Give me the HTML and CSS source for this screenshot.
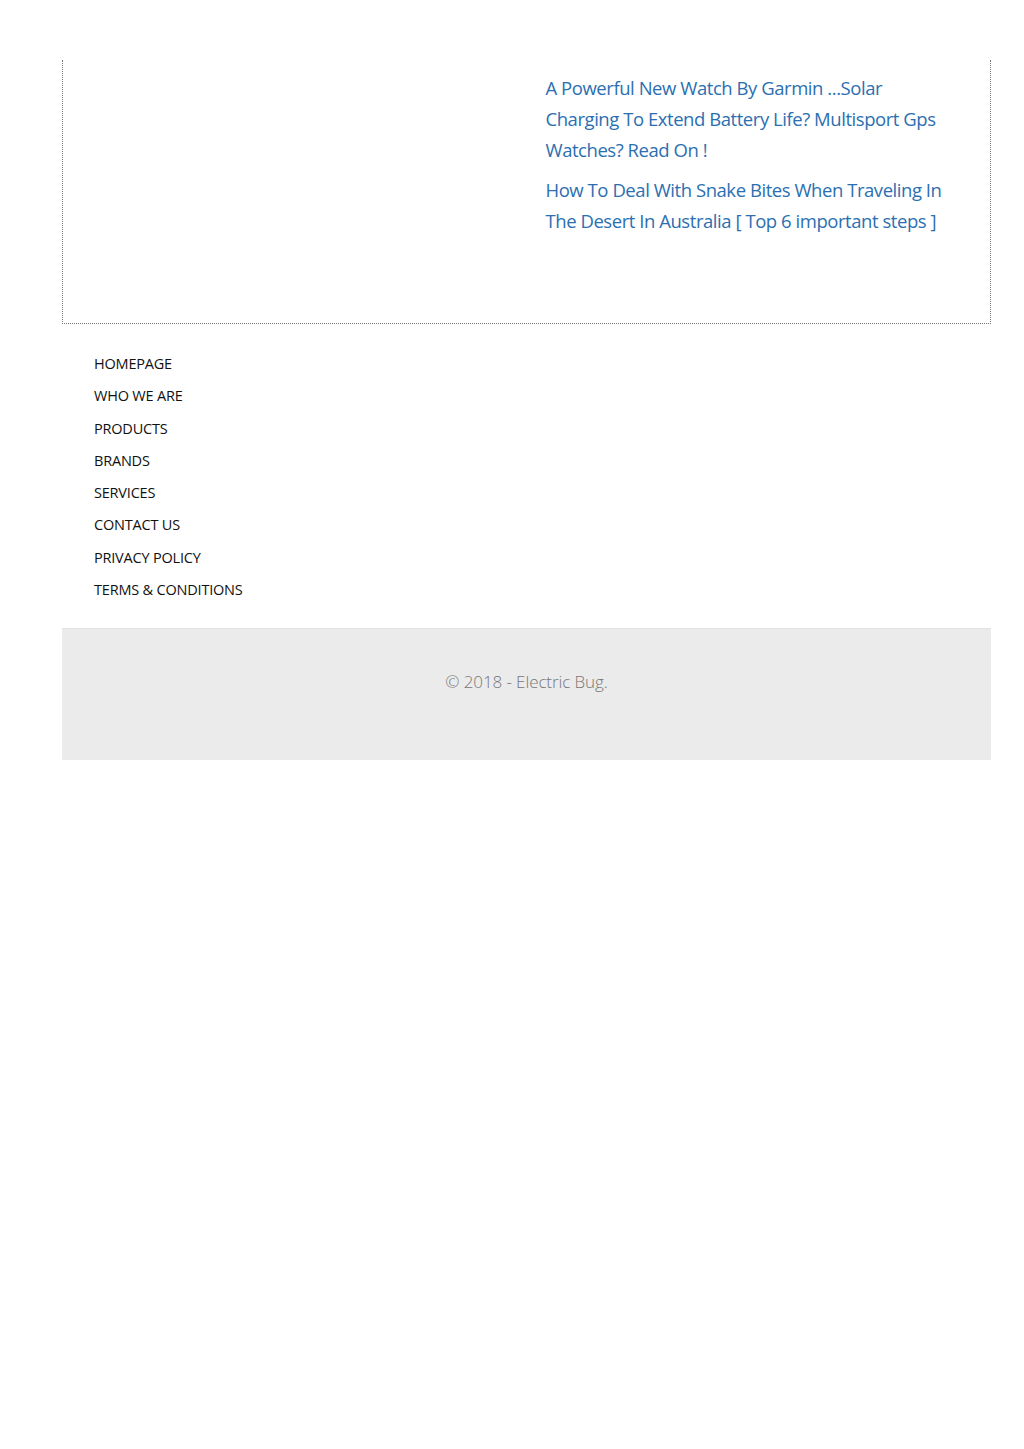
FILE: index.html
```html
<!DOCTYPE html>
<html lang="en">
<head>
    <meta charset="UTF-8">
    <meta name="viewport" content="width=device-width, initial-scale=1.0">
    <title>Electric Bug</title>
    <link rel="stylesheet" href="styles.css">
</head>
<body>
    <div class="page">
        <div class="widget-box">
            <div class="widget-col"></div>
            <div class="widget-col">
                <ul class="recent-posts">
                    <li><a href="#">A Powerful New Watch By Garmin ...Solar Charging To Extend Battery Life? Multisport Gps Watches? Read On !</a></li>
                    <li><a href="#">How To Deal With Snake Bites When Traveling In The Desert In Australia [ Top 6 important steps ]</a></li>
                </ul>
            </div>
        </div>

        <ul class="footer-nav">
            <li><a href="#">HOMEPAGE</a></li>
            <li><a href="#">WHO WE ARE</a></li>
            <li><a href="#">PRODUCTS</a></li>
            <li><a href="#">BRANDS</a></li>
            <li><a href="#">SERVICES</a></li>
            <li><a href="#">CONTACT US</a></li>
            <li><a href="#">PRIVACY POLICY</a></li>
            <li><a href="#">TERMS &amp; CONDITIONS</a></li>
        </ul>

        <footer class="copyright">
            <p>&copy; 2018 - Electric Bug.</p>
        </footer>
    </div>
</body>
</html>
```

FILE: styles.css
```css
body {
    margin: 0;
    background: #fff;
    font-family: 'Open Sans', 'Liberation Sans', sans-serif;
    color: #111;
}
.page {
    width: 929px;
    margin: 0 0 0 62px;
    padding-top: 60px;
}
.widget-box {
    display: grid;
    grid-template-columns: 1fr 1fr;
    height: 264px;
    box-sizing: border-box;
    border: 1px dotted #777;
    border-top: none;
}
.widget-col {
    padding: 12px 44px 0 19px;
    min-width: 0;
}
.recent-posts {
    list-style: none;
    margin: 0;
    padding: 0;
}
.recent-posts li {
    margin-bottom: 9px;
    font-size: 18.5px;
    letter-spacing: -0.45px;
    line-height: 31px;
}
.recent-posts a {
    color: #2b6fb1;
    text-decoration: none;
}
.footer-nav {
    list-style: none;
    margin: 0;
    padding: 24px 0 22px 32px;
}
.footer-nav li {
    line-height: 32.3px;
    font-size: 14.5px;
    letter-spacing: -0.2px;
}
.footer-nav a {
    color: #111;
    text-decoration: none;
}
.copyright {
    background: #ebebeb;
    border-top: 1px solid #e2e2e2;
    height: 132px;
    box-sizing: border-box;
    text-align: center;
}
.copyright p {
    margin: 0;
    padding-top: 41px;
    font-size: 17px;
    font-weight: 300;
    letter-spacing: -0.1px;
    color: #777;
}
```
